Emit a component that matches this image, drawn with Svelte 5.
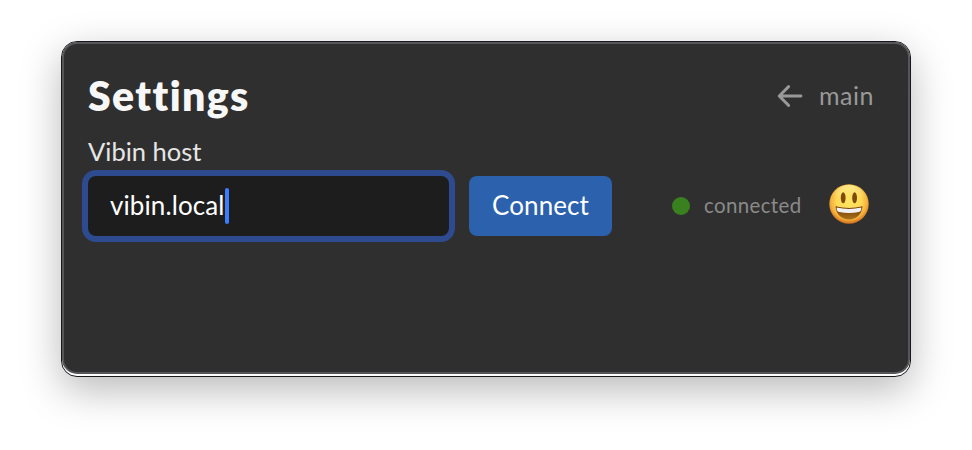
<script>
  let host = $state('vibin.local');
</script>

<main>
  <section class="window">
    <div class="panel">
      <header>
        <h1>Settings</h1>
        <a class="back" href="#main">
          <svg width="26" height="24" viewBox="0 0 26 24" fill="none" stroke="currentColor" stroke-width="2.9" stroke-linecap="round" stroke-linejoin="round">
            <path d="M24 12H2.5M11.6 2.6 2.2 12l9.4 9.4" />
          </svg>
          <span>main</span>
        </a>
      </header>
      <div class="label">Vibin host</div>
      <div class="row">
        <div class="field"><span>{host}</span><i class="caret"></i></div>
        <button><span>Connect</span></button>
        <div class="status">
          <i class="dot"></i>
          <span>connected</span>
        </div>
        <svg class="face" width="40" height="40" viewBox="0 0 40 40">
          <defs>
            <radialGradient id="skin" cx=".5" cy=".43" r=".57">
              <stop offset="0" stop-color="#ffe562" />
              <stop offset=".55" stop-color="#ffd955" />
              <stop offset=".82" stop-color="#f3ae3a" />
              <stop offset="1" stop-color="#cf6d1c" />
            </radialGradient>
            <linearGradient id="shine" x2="0" y2="1">
              <stop offset="0" stop-color="#fff4a0" stop-opacity=".75" />
              <stop offset=".4" stop-color="#fff4a0" stop-opacity="0" />
            </linearGradient>
            <linearGradient id="mouth" x2="0" y2="1">
              <stop offset="0" stop-color="#6b3a08" />
              <stop offset="1" stop-color="#a9701a" />
            </linearGradient>
          </defs>
          <circle cx="20" cy="20" r="19.7" fill="url(#skin)" />
          <ellipse cx="20" cy="17" rx="17" ry="16" fill="url(#shine)" />
          <ellipse cx="14.2" cy="13.8" rx="2.4" ry="5.5" fill="#7d4a0c" />
          <ellipse cx="25.6" cy="13.8" rx="2.4" ry="5.5" fill="#7d4a0c" />
          <path d="M6.5 22.3q13.5 3.3 27 0C32.8 30.8 27 35.4 20 35.4S7.2 30.8 6.5 22.3Z" fill="url(#mouth)" />
          <path d="M7.7 23.6q12.3 2.8 24.6 0c.2 2.7-.5 4-2.6 4.5q-9.7 1.9-19.4 0c-2.1-.5-2.8-1.8-2.6-4.5Z" fill="#f1f1f4" />
        </svg>
      </div>
    </div>
  </section>
</main>

<style>
  :global(body) {
    background: #fff;
  }
  main {
    box-sizing: border-box;
    width: 972px;
    height: 450px;
    padding: 41px 61px 73px;
    overflow: hidden;
    font-family: Lato, 'Noto Sans', sans-serif;
  }
  .window {
    box-sizing: border-box;
    height: 336px;
    padding-bottom: 2px;
    border: 1px solid #19191b;
    border-radius: 16px;
    background: #fff;
    box-shadow: 0 13px 40px rgba(0, 0, 0, 0.28);
  }
  .panel {
    box-sizing: border-box;
    height: 100%;
    padding: 26px 34px 0 24px;
    border: 2px solid #55565a;
    border-radius: 15px;
    background: #2f2f2f;
  }
  header {
    display: flex;
    align-items: center;
    justify-content: space-between;
    height: 52px;
  }
  h1 {
    margin: 0;
    color: #f7f7f7;
    font-size: 41px;
    font-weight: 800;
    line-height: 52px;
    letter-spacing: 1.4px;
  }
  .back {
    display: flex;
    align-items: center;
    gap: 16px;
    color: #999;
    font-size: 25px;
    letter-spacing: 0.5px;
    text-decoration: none;
  }
  .back span {
    padding-bottom: 2px;
  }
  .label {
    height: 34px;
    margin-top: 12px;
    color: #e6e6e6;
    font-size: 25.5px;
    line-height: 34px;
  }
  .row {
    display: flex;
    align-items: center;
    height: 60px;
    margin-top: 8px;
  }
  .field {
    box-sizing: border-box;
    display: flex;
    align-items: center;
    width: 361px;
    height: 60px;
    padding-left: 22px;
    border-radius: 8px;
    background: #1d1d1d;
    box-shadow: 0 0 0 6px #2d4b8e;
    color: #fff;
    font-size: 26px;
    letter-spacing: 0.1px;
  }
  .field span,
  button span,
  .status span {
    padding-bottom: 2px;
  }
  .caret {
    width: 4px;
    height: 36px;
    border-radius: 2px;
    background: #3b7dff;
  }
  button {
    display: flex;
    align-items: center;
    justify-content: center;
    width: 143px;
    height: 60px;
    margin: 0 0 0 20px;
    padding: 0;
    border: 0;
    border-radius: 8px;
    background: #2b61ad;
    color: #fff;
    font: 26px Lato, 'Noto Sans', sans-serif;
    letter-spacing: 0.1px;
  }
  .status {
    display: flex;
    align-items: center;
    gap: 14px;
    margin-left: 60px;
    color: #8a8a8a;
    font-size: 20.5px;
    letter-spacing: 0.35px;
  }
  .dot {
    width: 18px;
    height: 18px;
    border-radius: 50%;
    background: #39811f;
  }
  .face {
    margin: -4px 5px 0 auto;
  }
</style>
